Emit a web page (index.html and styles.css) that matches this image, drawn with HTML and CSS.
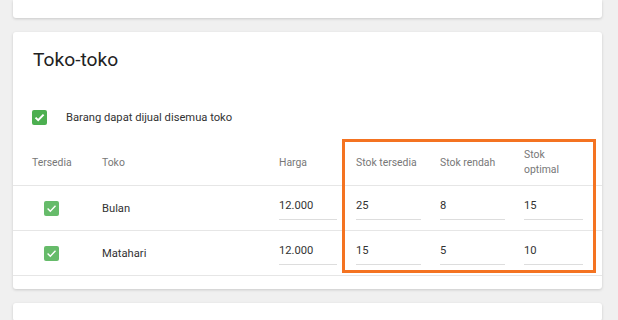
FILE: index.html
```html
<!DOCTYPE html>
<html lang="en">
<head>
  <meta charset="UTF-8">
  <meta name="viewport" content="width=device-width, initial-scale=1.0">
  <title>Toko-toko</title>
  <link rel="stylesheet" href="styles.css">
</head>
<body>

  <div class="page">
    <div class="card card-top"></div>

    <div class="card">
      <h2 class="card-title">Toko-toko</h2>

      <label class="check-row">
        <span class="check">
          <svg width="15" height="15" viewBox="0 0 15 15"><polyline points="3.5,7.6 6.2,10.2 11.6,4.6" fill="none" stroke="#fff" stroke-width="2"/></svg>
        </span>
        Barang dapat dijual disemua toko
      </label>

      <div class="stores">
        <div class="row head">
          <div class="cell">Tersedia</div>
          <div class="cell">Toko</div>
          <div class="cell">Harga</div>
          <div class="cell">Stok tersedia</div>
          <div class="cell">Stok rendah</div>
          <div class="cell">Stok<br>optimal</div>
        </div>

        <div class="row">
          <div class="cell cell-check">
            <span class="check check-sm">
              <svg width="15" height="15" viewBox="0 0 15 15"><polyline points="3.6,7.6 6.3,10.2 11.5,4.8" fill="none" stroke="#fff" stroke-width="1.4"/></svg>
            </span>
          </div>
          <div class="cell name">Bulan</div>
          <div class="cell"><input type="text" value="12.000"></div>
          <div class="cell"><input type="text" value="25"></div>
          <div class="cell"><input type="text" value="8"></div>
          <div class="cell"><input type="text" value="15"></div>
        </div>

        <div class="row">
          <div class="cell cell-check">
            <span class="check check-sm">
              <svg width="15" height="15" viewBox="0 0 15 15"><polyline points="3.6,7.6 6.3,10.2 11.5,4.8" fill="none" stroke="#fff" stroke-width="1.4"/></svg>
            </span>
          </div>
          <div class="cell name">Matahari</div>
          <div class="cell"><input type="text" value="12.000"></div>
          <div class="cell"><input type="text" value="15"></div>
          <div class="cell"><input type="text" value="5"></div>
          <div class="cell"><input type="text" value="10"></div>
        </div>

        <!-- highlight round the stock columns -->
        <div class="highlight"></div>
      </div>
    </div>

    <div class="card card-bottom"></div>
  </div>

</body>
</html>
```

FILE: styles.css
```css
body {
  margin: 0;
  font-family: Roboto, "Liberation Sans", sans-serif;
  background-color: #f0f0f0;
  color: #333;
  overflow: hidden; }

.page {
  padding: 0 16px 0 13px;
  display: flex;
  flex-direction: column;
  gap: 14px; }

.card {
  background-color: #fff;
  border-radius: 3px;
  box-shadow: 0 1px 3px rgba(0, 0, 0, 0.16); }

.card-top {
  height: 18px;
  border-radius: 0 0 3px 3px; }

.card-bottom { height: 18px; }

.card-title {
  margin: 16px 0 0 20px;
  font-size: 19.2px;
  line-height: 24px;
  font-weight: 400;
  color: #222; }

.check-row {
  display: flex;
  align-items: center;
  gap: 19px;
  margin: 38px 0 0 19px;
  font-size: 11.2px;
  line-height: 15px;
  color: #333; }

.check {
  display: block;
  width: 15px;
  height: 15px;
  border-radius: 2px;
  background-color: #4caf50; }

.check svg { display: block; }

.check-sm { background-color: #66bb6a; }

.stores {
  position: relative;
  margin: 14px 0 13px; }

.row {
  display: grid;
  grid-template-columns: 70px 177px 77px 84px 84px 78px;
  align-items: center;
  height: 44px;
  padding-left: 19px;
  border-bottom: 1px solid #e6e6e6; }

.row.head {
  height: 46px;
  font-size: 10.4px;
  line-height: 15px;
  color: #777; }

.cell { padding-right: 19px; }

.cell-check { padding-left: 12px; }

.name {
  font-size: 11.2px;
  padding-top: 1px; }

input[type="text"] {
  display: block;
  width: 100%;
  box-sizing: border-box;
  margin: 0;
  padding: 1px 0 5px;
  border: none;
  border-bottom: 1px solid #ddd;
  font-family: inherit;
  font-size: 11.2px;
  line-height: 16px;
  color: #333;
  background: transparent;
  outline: none; }

.highlight {
  position: absolute;
  left: 329px;
  top: 0;
  width: 254px;
  height: 134px;
  box-sizing: border-box;
  border: 3px solid #f47321; }
```
